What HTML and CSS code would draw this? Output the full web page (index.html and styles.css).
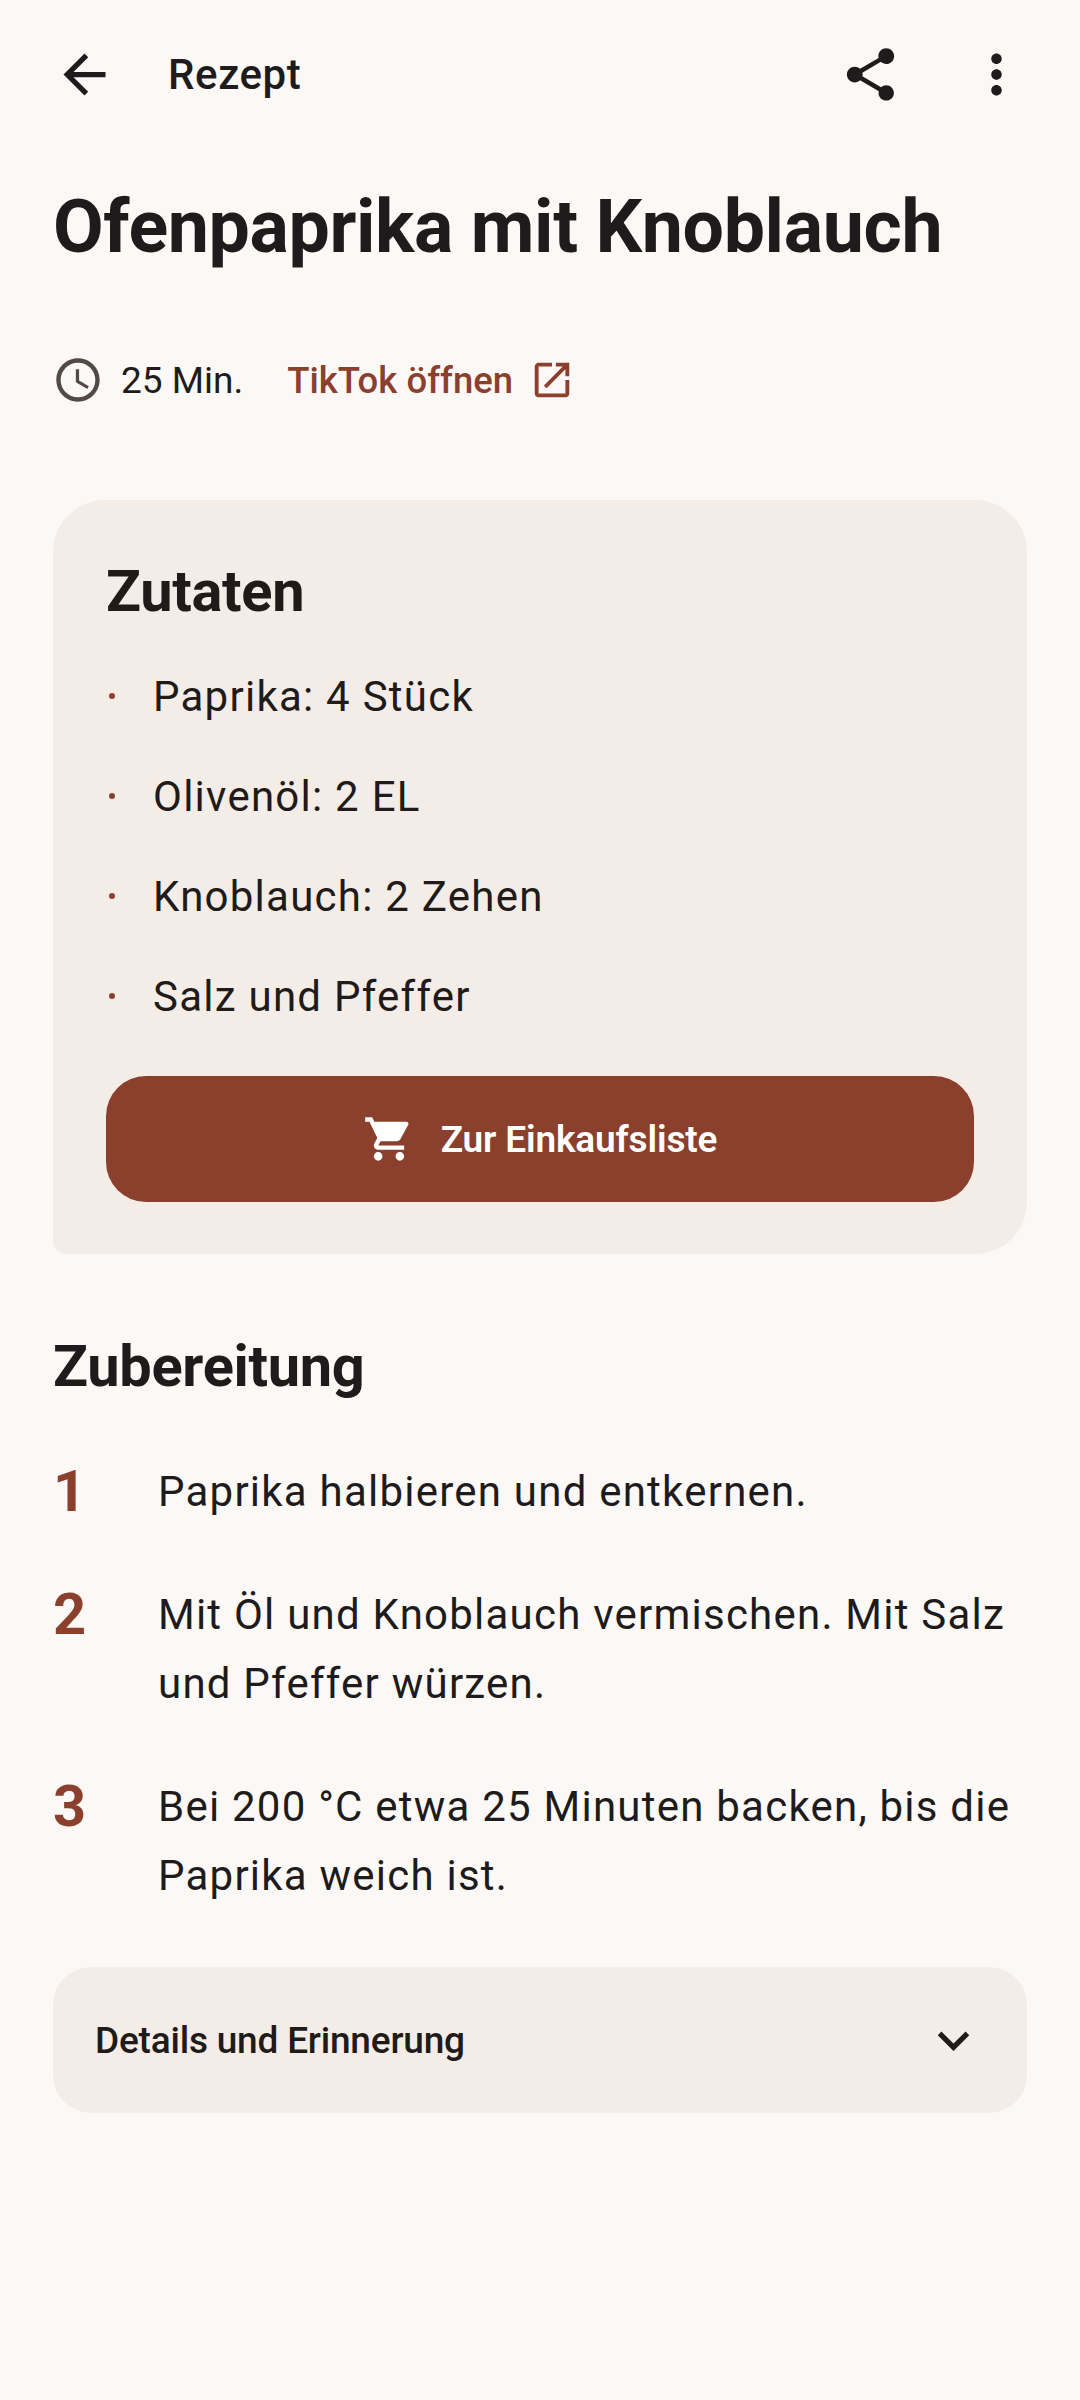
FILE: index.html
```html
<!DOCTYPE html>
<html lang="de">

<head>
  <meta charset="UTF-8">
  <meta name="viewport" content="width=device-width, initial-scale=1.0">
  <title>Rezept</title>
  <link rel="stylesheet" href="styles.css">
</head>

<body>
  <header class="top_bar">
    <svg class="back_icon" viewBox="0 0 24 24"><path d="M20 11H7.83l5.59-5.59L12 4l-8 8 8 8 1.41-1.41L7.83 13H20v-2z" /></svg>
    <div class="top_title">Rezept</div>
    <svg class="share_icon" viewBox="0 0 24 24"><path d="M18 16.08c-.76 0-1.44.3-1.96.77L8.91 12.7c.05-.23.09-.46.09-.7s-.04-.47-.09-.7l7.05-4.11c.54.5 1.25.81 2.04.81 1.66 0 3-1.34 3-3s-1.34-3-3-3-3 1.34-3 3c0 .24.04.47.09.7L8.04 9.81C7.5 9.31 6.79 9 6 9c-1.66 0-3 1.34-3 3s1.34 3 3 3c.79 0 1.5-.31 2.04-.81l7.12 4.16c-.05.21-.08.43-.08.65 0 1.61 1.31 2.92 2.92 2.92s2.92-1.31 2.92-2.92-1.31-2.92-2.92-2.92z" /></svg>
    <svg class="more_icon" viewBox="0 0 24 24"><path d="M12 8c1.1 0 2-.9 2-2s-.9-2-2-2-2 .9-2 2 .9 2 2 2zm0 2c-1.1 0-2 .9-2 2s.9 2 2 2 2-.9 2-2-.9-2-2-2zm0 6c-1.1 0-2 .9-2 2s.9 2 2 2 2-.9 2-2-.9-2-2-2z" /></svg>
  </header>

  <main class="content">
    <h1 class="recipe_title">Ofenpaprika mit Knoblauch</h1>

    <div class="meta">
      <svg class="clock_icon" viewBox="0 0 24 24"><path d="M11.99 2C6.47 2 2 6.48 2 12s4.47 10 9.99 10C17.52 22 22 17.52 22 12S17.52 2 11.99 2zM12 20c-4.42 0-8-3.58-8-8s3.58-8 8-8 8 3.58 8 8-3.58 8-8 8zm.5-13H11v6l5.25 3.15.75-1.23-4.5-2.67V7z" /></svg>
      <span class="meta_time">25 Min.</span>
      <span class="meta_link">TikTok öffnen</span>
      <svg class="open_icon" viewBox="0 0 24 24"><path d="M19 19H5V5h7V3H5c-1.11 0-2 .9-2 2v14c0 1.1.89 2 2 2h14c1.1 0 2-.9 2-2v-7h-2v7zM14 3v2h3.59l-9.83 9.83 1.41 1.41L19 6.41V10h2V3h-7z" /></svg>
    </div>

    <section class="ingredients">
      <h2 class="ingredients_title">Zutaten</h2>
      <ul class="ingredient_list">
        <li class="ingredient">Paprika: 4 Stück</li>
        <li class="ingredient">Olivenöl: 2 EL</li>
        <li class="ingredient">Knoblauch: 2 Zehen</li>
        <li class="ingredient">Salz und Pfeffer</li>
      </ul>
      <button type="button" class="shop_btn">
        <svg class="cart_icon" viewBox="0 0 24 24"><path d="M7 18c-1.1 0-1.99.9-1.99 2S5.9 22 7 22s2-.9 2-2-.9-2-2-2zM1 2v2h2l3.6 7.59-1.35 2.45c-.16.28-.25.61-.25.96 0 1.1.9 2 2 2h12v-2H7.42c-.14 0-.25-.11-.25-.25l.03-.12.9-1.63h7.45c.75 0 1.41-.41 1.75-1.03l3.58-6.49c.08-.14.12-.31.12-.49 0-.55-.45-1-1-1H5.21l-.94-2H1zm16 16c-1.1 0-1.99.9-1.99 2s.89 2 1.99 2 2-.9 2-2-.9-2-2-2z" /></svg>
        Zur Einkaufsliste
      </button>
    </section>

    <h2 class="steps_title">Zubereitung</h2>
    <ol class="step_list">
      <li class="step"><span class="step_num">1</span><span class="step_text">Paprika halbieren und entkernen.</span></li>
      <li class="step"><span class="step_num">2</span><span class="step_text">Mit Öl und Knoblauch vermischen. Mit Salz und Pfeffer würzen.</span></li>
      <li class="step"><span class="step_num">3</span><span class="step_text">Bei 200 °C etwa 25 Minuten backen, bis die Paprika weich ist.</span></li>
    </ol>

    <div class="details">
      <span class="details_label">Details und Erinnerung</span>
      <svg class="chevron_icon" viewBox="0 0 24 24"><path d="M7.41 8.59 12 13.17l4.59-4.58L18 10l-6 6-6-6 1.41-1.41z" /></svg>
    </div>
  </main>
</body>

</html>
```

FILE: styles.css
```css
* {
  box-sizing: border-box;
  margin: 0;
  padding: 0;
}

body {
  width: 1080px;
  height: 2400px;
  overflow: hidden;

  font-family: Roboto, "Noto Sans", sans-serif;
  color: rgb(29, 27, 28);
  background-color: rgb(252, 248, 245);
}

svg {
  display: block;
  flex-shrink: 0;
  fill: currentColor;
}

.top_bar {
  height: 148px;
  display: flex;
  align-items: center;
  padding-left: 53px;
}

.back_icon {
  width: 63px;
  height: 63px;
  margin-right: 52px;
}

.top_title {
  flex: 1;
  font-size: 42px;
  letter-spacing: 0.6px;
  font-weight: 500;
}

.share_icon {
  width: 63px;
  height: 63px;
  margin-right: 63px;
}

.more_icon {
  width: 63px;
  height: 63px;
  margin-right: 52px;
}

.content {
  padding: 0 53px;
}

.recipe_title {
  height: 154px;
  padding-top: 2px;
  font-size: 73.5px;
  line-height: 154px;
  letter-spacing: -0.37px;
  font-weight: 700;
}

.meta {
  height: 48px;
  margin-top: 54px;
  display: flex;
  align-items: center;
  font-size: 37px;
}

.clock_icon {
  width: 52px;
  height: 52px;
  margin-left: -1px;
  margin-right: 17px;
  color: rgb(83, 74, 71);
}

.meta_time {
  margin-right: 44px;
}

.meta_link {
  font-size: 36.5px;
  font-weight: 500;
  color: rgb(139, 63, 45);
  margin-right: 16px;
}

.open_icon {
  width: 46px;
  height: 46px;
  color: rgb(139, 63, 45);
}

.ingredients {
  margin-top: 96px;
  padding: 52px 53px;
  height: 754px;

  background-color: rgb(244, 236, 231);
  border-radius: 52px 52px 52px 13px;
}

.ingredients_title {
  padding-top: 2px;
  font-size: 57.75px;
  line-height: 74px;
  letter-spacing: -0.3px;
  font-weight: 700;
  color: rgb(32, 26, 24);
}

.ingredient_list {
  list-style: none;
  margin-top: 18px;
}

.ingredient {
  height: 100px;
  display: flex;
  align-items: center;
  gap: 38px;

  font-size: 42px;
  letter-spacing: 1.25px;
  color: rgb(32, 26, 24);
}

.ingredient::before {
  content: "";
  width: 6px;
  height: 6px;
  margin-left: 3px;
  border-radius: 50%;
  background-color: rgb(139, 63, 45);
}

.shop_btn {
  width: 100%;
  height: 126px;
  margin-top: 30px;

  display: flex;
  justify-content: center;
  align-items: center;
  gap: 26px;

  border: none;
  border-radius: 40px;
  color: white;
  background-color: rgb(139, 63, 45);

  font-family: inherit;
  font-size: 37px;
  font-weight: 600;
  letter-spacing: -0.15px;
}

.cart_icon {
  width: 52px;
  height: 52px;
}

.steps_title {
  margin-top: 67px;
  font-size: 57.75px;
  line-height: 90px;
  letter-spacing: -0.3px;
  font-weight: 700;
}

.step_list {
  list-style: none;
  margin-top: 46px;
}

.step {
  display: flex;
  margin-bottom: 54px;
}

.step_num {
  width: 105px;
  flex-shrink: 0;
  font-size: 57.75px;
  line-height: 69px;
  font-weight: 700;
  color: rgb(139, 63, 45);
}

.step_text {
  font-size: 42px;
  line-height: 69px;
  letter-spacing: 1.23px;
}

.details {
  height: 146px;
  margin-top: 57px;
  padding: 0 42px;

  display: flex;
  justify-content: space-between;
  align-items: center;

  background-color: rgb(244, 236, 231);
  border-radius: 38px;
}

.details_label {
  font-size: 37px;
  letter-spacing: -0.2px;
  font-weight: 500;
  color: rgb(32, 26, 24);
}

.chevron_icon {
  width: 63px;
  height: 63px;
  color: rgb(32, 26, 24);
}
```
